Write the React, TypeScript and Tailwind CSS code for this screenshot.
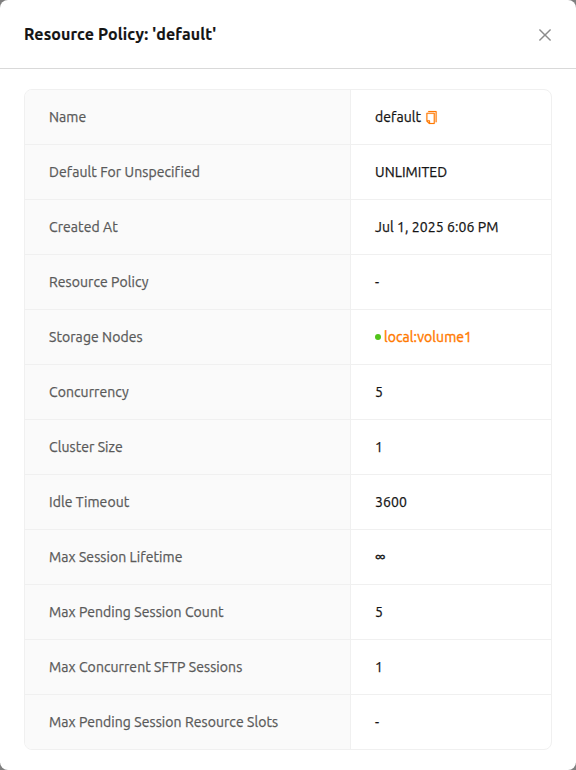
import type { ReactNode } from 'react';
import { AiOutlineClose, AiOutlineCopy } from 'react-icons/ai';

type Row = { label: string; value: ReactNode };

const rows: Row[] = [
  {
    label: 'Name',
    value: (
      <>
        default
        <AiOutlineCopy className="ml-[3px] size-[15px] stroke-[#ff7a00] stroke-[10px] text-[#ff7a00]" />
      </>
    ),
  },
  { label: 'Default For Unspecified', value: 'UNLIMITED' },
  { label: 'Created At', value: 'Jul 1, 2025 6:06 PM' },
  { label: 'Resource Policy', value: '-' },
  {
    label: 'Storage Nodes',
    value: (
      <>
        <span className="mr-[3px] size-1.5 rounded-full bg-[#52c41a]" />
        <span className="text-[#ff7a00] [-webkit-text-stroke:0.4px]">local:volume1</span>
      </>
    ),
  },
  { label: 'Concurrency', value: '5' },
  { label: 'Cluster Size', value: '1' },
  { label: 'Idle Timeout', value: '3600' },
  {
    label: 'Max Session Lifetime',
    value: <span className="pb-[3px] text-[17px] leading-none [-webkit-text-stroke:0.4px]">∞</span>,
  },
  { label: 'Max Pending Session Count', value: '5' },
  { label: 'Max Concurrent SFTP Sessions', value: '1' },
  { label: 'Max Pending Session Resource Slots', value: '-' },
];

export default function App() {
  return (
    <div className="h-[770px] w-[576px] bg-[#7f7f7f] font-['Ubuntu','Noto_Sans',sans-serif]">
      <div className="flex h-full flex-col rounded-lg bg-white">
        <header className="flex h-[69px] items-center justify-between border-b border-[#d9d9d9] px-6">
          <h1 className="text-base font-bold tracking-[0.12px] text-[#141414] [-webkit-text-stroke:0.15px]">
            Resource Policy: 'default'
          </h1>
          <AiOutlineClose className="mt-0.5 -mr-0.5 size-[18px] text-[#8c8c8c]" />
        </header>
        <dl className="mx-6 mt-5 overflow-hidden rounded-lg border border-[#f0f0f0] text-sm tracking-[0.08px] [-webkit-text-stroke:0.25px]">
          {rows.map((row) => (
            <div key={row.label} className="flex h-[55px] border-b border-[#f0f0f0] last:h-[54px] last:border-b-0">
              <dt className="flex w-[326px] items-center border-r border-[#f0f0f0] bg-[#fafafa] pl-6 text-[#595959]">
                {row.label}
              </dt>
              <dd className="flex items-center pl-6 text-[#141414]">{row.value}</dd>
            </div>
          ))}
        </dl>
      </div>
    </div>
  );
}
